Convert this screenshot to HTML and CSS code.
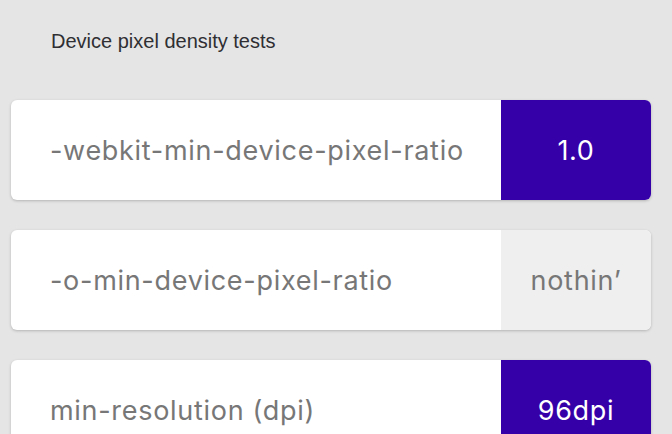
FILE: index.html
```html
<!DOCTYPE html>
<html>
<head>
<meta charset="utf-8">
<link rel="stylesheet" href="styles.css">
</head>
<body>
<main class="page">
  <h1 class="title">Device pixel density tests</h1>
  <ul class="tests">
    <li class="test">
      <span class="label">-webkit-min-device-pixel-ratio</span>
      <span class="value on">1.0</span>
    </li>
    <li class="test">
      <span class="label">-o-min-device-pixel-ratio</span>
      <span class="value off">nothin’</span>
    </li>
    <li class="test">
      <span class="label">min-resolution (dpi)</span>
      <span class="value on">96dpi</span>
    </li>
  </ul>
</main>
</body>
</html>
```
FILE: styles.css
```css
html, body {
  margin: 0;
  padding: 0;
  background: #e5e5e5;
  font-family: "Liberation Sans", Arial, sans-serif;
}
.page {
  padding: 0 21px 0 11px;
}
.title {
  margin: 0;
  padding: 31px 0 0 40px;
  height: 100px;
  box-sizing: border-box;
  font-size: 20px;
  font-weight: normal;
  color: #2f2f33;
  line-height: 20px;
}
.tests {
  list-style: none;
  margin: 0;
  padding: 0;
  display: flex;
  flex-direction: column;
  gap: 30px;
}
.test {
  display: flex;
  height: 100px;
  background: #fff;
  border-radius: 6px;
  box-shadow: 0 1px 3px rgba(0,0,0,0.22);
  overflow: hidden;
}
.label {
  flex: 1;
  display: flex;
  align-items: center;
  padding-left: 39px;
  font-family: Inter, "Liberation Sans", sans-serif;
  font-size: 27px;
  letter-spacing: 0.7px;
  color: #777;
}
.value {
  width: 150px;
  display: flex;
  align-items: center;
  justify-content: center;
  font-family: Inter, "Liberation Sans", sans-serif;
  font-size: 27px;
  letter-spacing: 0.7px;
}
.value.on {
  background: #3500a8;
  color: #fff;
}
.value.off {
  background: #efefef;
  color: #777;
}
```
